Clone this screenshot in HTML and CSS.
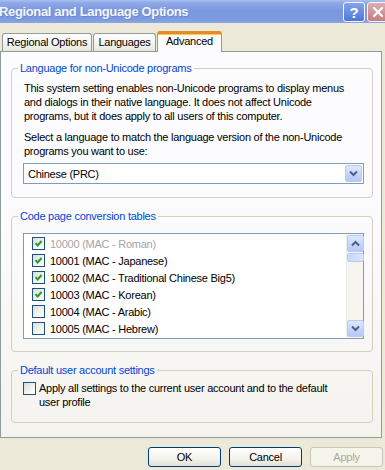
FILE: index.html
```html
<!DOCTYPE html>
<html lang="en">
<head>
    <meta charset="UTF-8">
    <title>Regional and Language Options</title>
    <link rel="stylesheet" href="styles.css">
</head>
<body>
    <div class="titlebar">
        <span class="title">Regional and Language Options</span>
        <div class="caption-buttons">
            <span class="cap help">?</span>
            <span class="cap close">
                <svg width="12" height="12" viewBox="0 0 12 12"><path d="M2 2 L10 10 M10 2 L2 10" stroke="#fff" stroke-width="2.2" stroke-linecap="round"/></svg>
            </span>
        </div>
    </div>

    <div class="tabs">
        <div class="tab tab-regional">Regional Options</div>
        <div class="tab tab-languages">Languages</div>
        <div class="tab tab-advanced active">Advanced</div>
    </div>

    <div class="panel">
        <fieldset class="group group-lang">
            <legend>Language for non-Unicode programs</legend>
            <p class="desc">This system setting enables non-Unicode programs to display menus<br>and dialogs in their native language. It does not affect Unicode<br>programs, but it does apply to all users of this computer.</p>
            <p class="desc second">Select a language to match the language version of the non-Unicode<br>programs you want to use:</p>
            <div class="combo">
                <span class="combo-text">Chinese (PRC)</span>
                <span class="combo-btn">
                    <svg width="9" height="7" viewBox="0 0 9 7"><path d="M1 1.5 L4.5 5 L8 1.5" fill="none" stroke="#4d6185" stroke-width="2"/></svg>
                </span>
            </div>
        </fieldset>

        <fieldset class="group group-codepage">
            <legend>Code page conversion tables</legend>
            <div class="list">
                <div class="list-items">
                    <div class="item disabled"><span class="check on"><svg width="11" height="11" viewBox="0 0 11 11"><path d="M2.5 5.2 L4.6 7.5 L8.6 3" fill="none" stroke="#21a121" stroke-width="2"/></svg></span>10000 (MAC - Roman)</div>
                    <div class="item"><span class="check on"><svg width="11" height="11" viewBox="0 0 11 11"><path d="M2.5 5.2 L4.6 7.5 L8.6 3" fill="none" stroke="#21a121" stroke-width="2"/></svg></span>10001 (MAC - Japanese)</div>
                    <div class="item"><span class="check on"><svg width="11" height="11" viewBox="0 0 11 11"><path d="M2.5 5.2 L4.6 7.5 L8.6 3" fill="none" stroke="#21a121" stroke-width="2"/></svg></span>10002 (MAC - Traditional Chinese Big5)</div>
                    <div class="item"><span class="check on"><svg width="11" height="11" viewBox="0 0 11 11"><path d="M2.5 5.2 L4.6 7.5 L8.6 3" fill="none" stroke="#21a121" stroke-width="2"/></svg></span>10003 (MAC - Korean)</div>
                    <div class="item"><span class="check"></span>10004 (MAC - Arabic)</div>
                    <div class="item"><span class="check"></span>10005 (MAC - Hebrew)</div>
                </div>
                <div class="scrollbar">
                    <div class="sb-btn">
                        <svg width="9" height="7" viewBox="0 0 9 7"><path d="M1 5.5 L4.5 2 L8 5.5" fill="none" stroke="#4d6185" stroke-width="2"/></svg>
                    </div>
                    <div class="sb-thumb"></div>
                    <div class="sb-track"></div>
                    <div class="sb-btn">
                        <svg width="9" height="7" viewBox="0 0 9 7"><path d="M1 1.5 L4.5 5 L8 1.5" fill="none" stroke="#4d6185" stroke-width="2"/></svg>
                    </div>
                </div>
            </div>
        </fieldset>

        <fieldset class="group group-default">
            <legend>Default user account settings</legend>
            <label class="check-row">
                <span class="check"></span>
                <span>Apply all settings to the current user account and to the default<br>user profile</span>
            </label>
        </fieldset>
    </div>

    <div class="button-row">
        <button class="btn">OK</button>
        <button class="btn">Cancel</button>
        <button class="btn" disabled>Apply</button>
    </div>
</body>
</html>
```

FILE: styles.css
```css
/* XP style dialog */
body {
    margin: 0;
    width: 385px;
    height: 470px;
    overflow: hidden;
    background-color: #ece9d8;
    font-family: "Liberation Sans", Arial, sans-serif;
    font-size: 11px;
    letter-spacing: -0.25px;
    color: #000;
}

.titlebar {
    height: 23px;
    display: flex;
    align-items: center;
    justify-content: space-between;
    background: linear-gradient(#a9c0f1 0, #8ea8e7 3px, #7b97df 11px, #7d99e0 19px, #8ba5e5 23px);
}

.title {
    margin-left: -1px;
    font-weight: bold;
    font-size: 13px;
    letter-spacing: -0.35px;
    color: #f2f5fd;
    text-shadow: 1px 1px 0 #6c87cc;
}

.caption-buttons {
    display: flex;
    gap: 2px;
    margin-right: -4px;
    align-self: flex-start;
    margin-top: 2px;
}

.cap {
    width: 20px;
    height: 18px;
    border: 1px solid #f4f6fc;
    border-radius: 3px;
    color: #fff;
    font-weight: bold;
    display: flex;
    align-items: center;
    justify-content: center;
}

.help {
    background: linear-gradient(#84a3ec, #4f77db);
    font-size: 15px;
}

.close {
    background: linear-gradient(#dcaeb0, #c57f82);
}

.tabs {
    display: flex;
    align-items: flex-end;
    gap: 1px;
    padding: 8px 0 0 2px;
}

.tab {
    height: 18px;
    box-sizing: border-box;
    border: 1px solid #919b9c;
    border-bottom: none;
    border-radius: 3px 3px 0 0;
    background: linear-gradient(#ffffff, #f3f3ef 60%, #e6e5dd);
    text-align: center;
    line-height: 17px;
}

.tab-regional { width: 90px; }
.tab-languages { width: 63px; }
.tab-advanced { width: 65px; }

.tab.active {
    position: relative;
    z-index: 1;
    height: 21px;
    margin-bottom: -1px;
    background: #fcfcfe;
    border-top: 3px solid #e68b2c;
    box-shadow: inset 0 1px 0 #ffc73c;
    line-height: 15px;
}

.panel {
    width: 382px;
    box-sizing: border-box;
    border: 1px solid #919b9c;
    background: linear-gradient(#fcfcfe 40%, #f4f3ee);
    padding: 10px 8px 14px 10px;
}

.panel .group + .group {
    margin-top: 12px;
}

.group {
    margin: 0;
    min-width: 0;
    border: 1px solid #d0d0bf;
    border-radius: 4px;
}

.group legend {
    color: #0046d5;
    padding: 0 2px;
    margin-left: -5px;
    line-height: 13px;
}

.group-lang {
    padding: 6px 8px 13px 11px;
}

.group-codepage {
    padding: 10px 8px 12px 11px;
}

.group-default {
    padding: 4px 8px 13px 11px;
}

.desc {
    margin: 0;
    padding-left: 1px;
    line-height: 14px;
    white-space: nowrap;
}

.desc.second {
    margin-top: 7px;
}

.combo {
    margin-top: 5px;
    height: 21px;
    box-sizing: border-box;
    border: 1px solid #7f9db9;
    background-color: #fff;
    display: flex;
    align-items: center;
    justify-content: space-between;
}

.combo-text {
    padding-left: 4px;
}

.combo-btn,
.sb-btn {
    width: 15px;
    height: 15px;
    border: 1px solid #b9cbf3;
    border-radius: 2px;
    background: linear-gradient(#dfe8fd, #c2d3fb 60%, #b6c9f5);
    display: flex;
    align-items: center;
    justify-content: center;
}

.combo-btn {
    margin-right: 1px;
}

.list {
    display: flex;
    height: 106px;
    box-sizing: border-box;
    border: 1px solid #7f9db9;
    background-color: #fff;
}

.list-items {
    flex: 1;
    padding-top: 1px;
}

.item {
    height: 17px;
    display: flex;
    align-items: center;
    padding-left: 8px;
    white-space: nowrap;
}

.item .check {
    margin-right: 5px;
}

.item.disabled {
    color: #a5a5a5;
}

.check {
    width: 13px;
    height: 13px;
    box-sizing: border-box;
    border: 1px solid #1c5180;
    background: linear-gradient(135deg, #dcdcd7, #fbfbf9 80%);
    display: flex;
    align-items: center;
    justify-content: center;
    flex-shrink: 0;
}

.scrollbar {
    width: 17px;
    display: flex;
    flex-direction: column;
    align-items: center;
    background-color: #f6f5f0;
    border-left: 1px solid #eeede5;
    padding: 1px 0;
    box-sizing: border-box;
}

.sb-thumb {
    width: 15px;
    height: 7px;
    margin-top: 1px;
    border: 1px solid #b9cbf3;
    border-radius: 2px;
    background: linear-gradient(90deg, #c8d7fb, #dbe5fd);
}

.sb-track {
    flex: 1;
}

.check-row {
    display: flex;
    align-items: flex-start;
    gap: 3px;
    line-height: 14px;
    white-space: nowrap;
}

.check-row .check {
    margin-top: 1px;
}

.button-row {
    display: flex;
    justify-content: flex-end;
    gap: 8px;
    margin-top: 9px;
    padding-right: 2px;
}

.btn {
    width: 73px;
    height: 20px;
    padding: 0;
    font-family: "Liberation Sans", Arial, sans-serif;
    font-size: 11px;
    letter-spacing: -0.25px;
    color: #000;
    border: 1px solid #003c74;
    border-radius: 3px;
    background: linear-gradient(#ffffff, #f3f2ec 60%, #e3e0d4);
}

.btn:disabled {
    color: #aca899;
    border-color: #c9c7ba;
    background: #f5f4ea;
}
```
